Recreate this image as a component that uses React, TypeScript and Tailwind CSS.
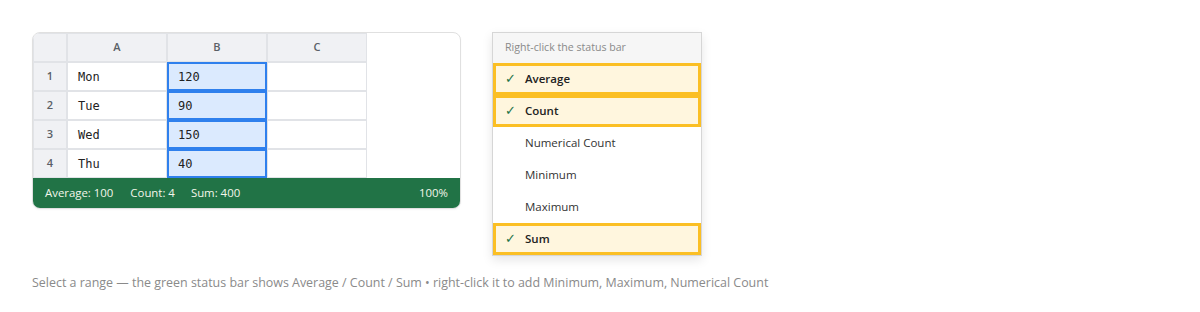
import React from "react";

const rows: [string, string, string][] = [
  ["1", "Mon", "120"],
  ["2", "Tue", "90"],
  ["3", "Wed", "150"],
  ["4", "Thu", "40"],
];

const items: { label: string; checked: boolean }[] = [
  { label: "Average", checked: true },
  { label: "Count", checked: true },
  { label: "Numerical Count", checked: false },
  { label: "Minimum", checked: false },
  { label: "Maximum", checked: false },
  { label: "Sum", checked: true },
];

export default function App() {
  return (
    <div
      className="w-[1200px] h-[312px] bg-white pl-[32px] pt-[32px]"
      style={{ fontFamily: '"Open Sans", "Noto Sans", sans-serif' }}
    >
      <div className="flex items-start gap-[31px]">
        <div className="w-[429px] h-[177px] rounded-[8px] border border-[#e0e0e0] overflow-hidden flex flex-col bg-white shadow-[0_1px_2px_rgba(0,0,0,0.04)]">
          <div className="flex-1 flex">
            <div className="flex flex-col">
              <div className="flex h-[29px]">
                <div className="w-[34px] bg-[#f0f1f4] border border-[#e1e3e7]" />
                {["A", "B", "C"].map((c) => (
                  <div
                    key={c}
                    className="w-[100px] bg-[#f0f1f4] border border-[#e1e3e7] flex items-center justify-center text-[11px] font-semibold text-[#5a5f66]"
                  >
                    {c}
                  </div>
                ))}
              </div>
              {rows.map(([n, a, b]) => (
                <div key={n} className="flex h-[29px]">
                  <div className="w-[34px] bg-[#f0f1f4] border border-[#e1e3e7] flex items-center justify-center text-[11px] font-semibold text-[#5a5f66]">
                    {n}
                  </div>
                  <div
                    className="w-[100px] border border-[#e1e3e7] flex items-center pl-[10px] text-[12px] text-[#222]"
                    style={{ fontFamily: '"DejaVu Sans Mono", monospace' }}
                  >
                    {a}
                  </div>
                  <div
                    className="w-[100px] border-2 border-[#2f80ed] bg-[#dbeafe] flex items-center pl-[9px] text-[12px] text-[#222]"
                    style={{ fontFamily: '"DejaVu Sans Mono", monospace' }}
                  >
                    {b}
                  </div>
                  <div className="w-[100px] border border-[#e1e3e7]" />
                </div>
              ))}
            </div>
          </div>
          <div className="h-[30px] bg-[#217346] flex items-center px-[12px] text-[11.4px] text-[#f4f6ea]">
            <span>Average: 100</span>
            <span className="ml-[17px]">Count: 4</span>
            <span className="ml-[16px]">Sum: 400</span>
            <span className="ml-auto">100%</span>
          </div>
        </div>

        <div className="w-[210px] border border-[#d6d6d6] bg-white shadow-[0_4px_10px_rgba(0,0,0,0.10)]">
          <div className="h-[30px] bg-[#f6f6f6] flex items-center pl-[12px] text-[10.6px] text-[#8a8a8a]">
            Right-click the status bar
          </div>
          {items.map((it) =>
            it.checked ? (
              <div
                key={it.label}
                className="h-[32px] border-[3px] border-[#fbbf24] bg-[#fff6de] flex items-center text-[11.5px] font-semibold text-[#222]"
              >
                <span className="w-[29px] pl-[9px] text-[#217346] text-[13px] font-normal">✓</span>
                <span>{it.label}</span>
              </div>
            ) : (
              <div
                key={it.label}
                className="h-[32px] flex items-center pl-[32px] text-[11.5px] text-[#333]"
              >
                {it.label}
              </div>
            )
          )}
        </div>
      </div>
      <div className="mt-[18px] text-[12.45px] text-[#8a8a8a]">
        Select a range — the green status bar shows Average / Count / Sum • right-click it to add Minimum, Maximum, Numerical Count
      </div>
    </div>
  );
}
